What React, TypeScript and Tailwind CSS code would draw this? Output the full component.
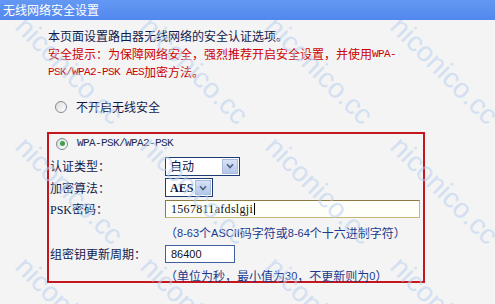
import React from "react";

const cn = "font-['Noto_Sans_CJK_SC',sans-serif]";
const mono = "font-['Liberation_Mono','Noto_Sans_CJK_SC',monospace] text-[11px] tracking-[-0.6px]";
const sans = "font-['Liberation_Sans','Noto_Sans_CJK_SC',sans-serif] text-[11px]";

const marks = [
  "left-[30px] top-[12px]",
  "left-[155px] top-[12px]",
  "left-[280px] top-[12px]",
  "left-[405px] top-[12px]",
  "left-[30px] top-[132px]",
  "left-[155px] top-[132px]",
  "left-[280px] top-[132px]",
  "left-[405px] top-[132px]",
  "left-[30px] top-[252px]",
  "left-[155px] top-[252px]",
  "left-[280px] top-[252px]",
  "left-[405px] top-[252px]",
];

function Radio({ checked }: { checked?: boolean }) {
  return (
    <span className="w-[12px] h-[12px] rounded-full border border-[#7d8a96] bg-gradient-to-br from-[#dcdcdc] to-white flex items-center justify-center shrink-0">
      {checked && <span className="w-[5px] h-[5px] rounded-full bg-[#3ea04a]" />}
    </span>
  );
}

function Select({ value, width, latin }: { value: string; width: string; latin?: boolean }) {
  return (
    <div className={`${width} h-[19px] border border-[#1d3b73] bg-white flex items-stretch`}>
      <span className={`flex-1 pl-[4px] flex items-center text-[#0c1540] ${latin ? "font-['Liberation_Serif',serif] text-[12px] font-bold" : `${cn} text-[12px]`}`}>
        {value}
      </span>
      <span className="w-[16px] m-[1px] bg-gradient-to-b from-[#d7e2f6] to-[#b4c6e8] border border-[#a9bcdd] flex items-center justify-center">
        <svg viewBox="0 0 8 6" className="w-[8px] h-[6px]">
          <path d="M1 1.2 L4 4.5 L7 1.2" stroke="#4d6185" strokeWidth="1.6" fill="none" />
        </svg>
      </span>
    </div>
  );
}

export default function App() {
  return (
    <div className={`relative w-[495px] h-[304px] bg-[#f4f4f4] overflow-hidden ${cn} text-[12px] text-[#111a4c]`}>
      {/* header */}
      <div className="relative z-10 h-[20px] bg-gradient-to-b from-[#6498f3] to-[#5288ee] text-white text-[12px] leading-[20px] pl-[3px]">
        无线网络安全设置
      </div>

      <div className="pl-[48px] pt-[7px]">
        <p className="h-[18px] flex items-center">本页面设置路由器无线网络的安全认证选项。</p>
        <p className="h-[18px] flex items-center text-[#cc0000] whitespace-nowrap">
          安全提示：为保障网络安全，强烈推荐开启安全设置，并使用<span className={mono}>WPA-</span>
        </p>
        <p className="h-[18px] flex items-center text-[#cc0000]">
          <span className={mono}>PSK/WPA2-PSK AES</span>加密方法。
        </p>

        <div className="flex items-center gap-[9px] h-[18px] mt-[17px] pl-[7px]">
          <Radio />
          <span>不开启无线安全</span>
        </div>
      </div>

      {/* WPA box */}
      <div className="ml-[47px] mt-[16px] w-[378px] h-[151px] border-2 border-[#c4161c] pl-[1px]">
        <div className="flex items-center gap-[9px] h-[17px] pl-[6px] mt-[1px]">
          <Radio checked />
          <span className={`${mono} text-[#222a55]`}>WPA-PSK/WPA2-PSK</span>
        </div>

        <div className="flex items-center h-[20px] mt-[4px]">
          <span className="w-[115px]">认证类型：</span>
          <Select value="自动" width="w-[75px]" />
        </div>

        <div className="flex items-center h-[19px] mt-[2px]">
          <span className="w-[115px]">加密算法：</span>
          <Select value="AES" width="w-[48px]" latin />
        </div>

        <div className="flex items-center h-[18px] mt-[3px]">
          <span className="w-[115px]">
            <span className="font-['Liberation_Serif',serif] text-[12px]">PSK</span>密码：
          </span>
          <div className="w-[255px] h-[18px] border border-[#8d7a40] border-r-[#c9b47a] border-b-[#c9b47a] bg-[#fffffa] flex items-center pl-[5px]">
            <span className="font-['Liberation_Serif',serif] text-[12px] tracking-[0.3px] text-[#111]">1567811afdslgji</span>
            <span className="w-[1px] h-[12px] bg-black ml-[1px]" />
          </div>
        </div>

        <div className="flex items-center h-[18px] mt-[6px] pl-[115px] text-[#1b3a8c]">
          （<span className={sans}>8-63</span>个<span className={sans}>ASCII</span>码字符或<span className={sans}>8-64</span>个十六进制字符）
        </div>

        <div className="flex items-center h-[18px] mt-[3px]">
          <span className="w-[115px]">组密钥更新周期：</span>
          <div className="w-[70px] h-[18px] border border-[#3f5f9e] bg-white flex items-center pl-[5px]">
            <span className={`${sans} text-[#111]`}>86400</span>
          </div>
        </div>

        <div className="flex items-center h-[14px] mt-[6px] pl-[115px] text-[#1b3a8c]">
          （单位为秒，最小值为<span className={sans}>30</span>，不更新则为<span className={sans}>0</span>）
        </div>
      </div>

      {/* watermark */}
      <div className="absolute inset-0 pointer-events-none">
        {marks.map((m, i) => (
          <span
            key={i}
            className={`absolute ${m} origin-top-left rotate-45 whitespace-nowrap font-['Liberation_Sans',sans-serif] text-[28px] leading-none text-[#b9d0f0] opacity-55`}
          >
            niconico.cc
          </span>
        ))}
      </div>
    </div>
  );
}
